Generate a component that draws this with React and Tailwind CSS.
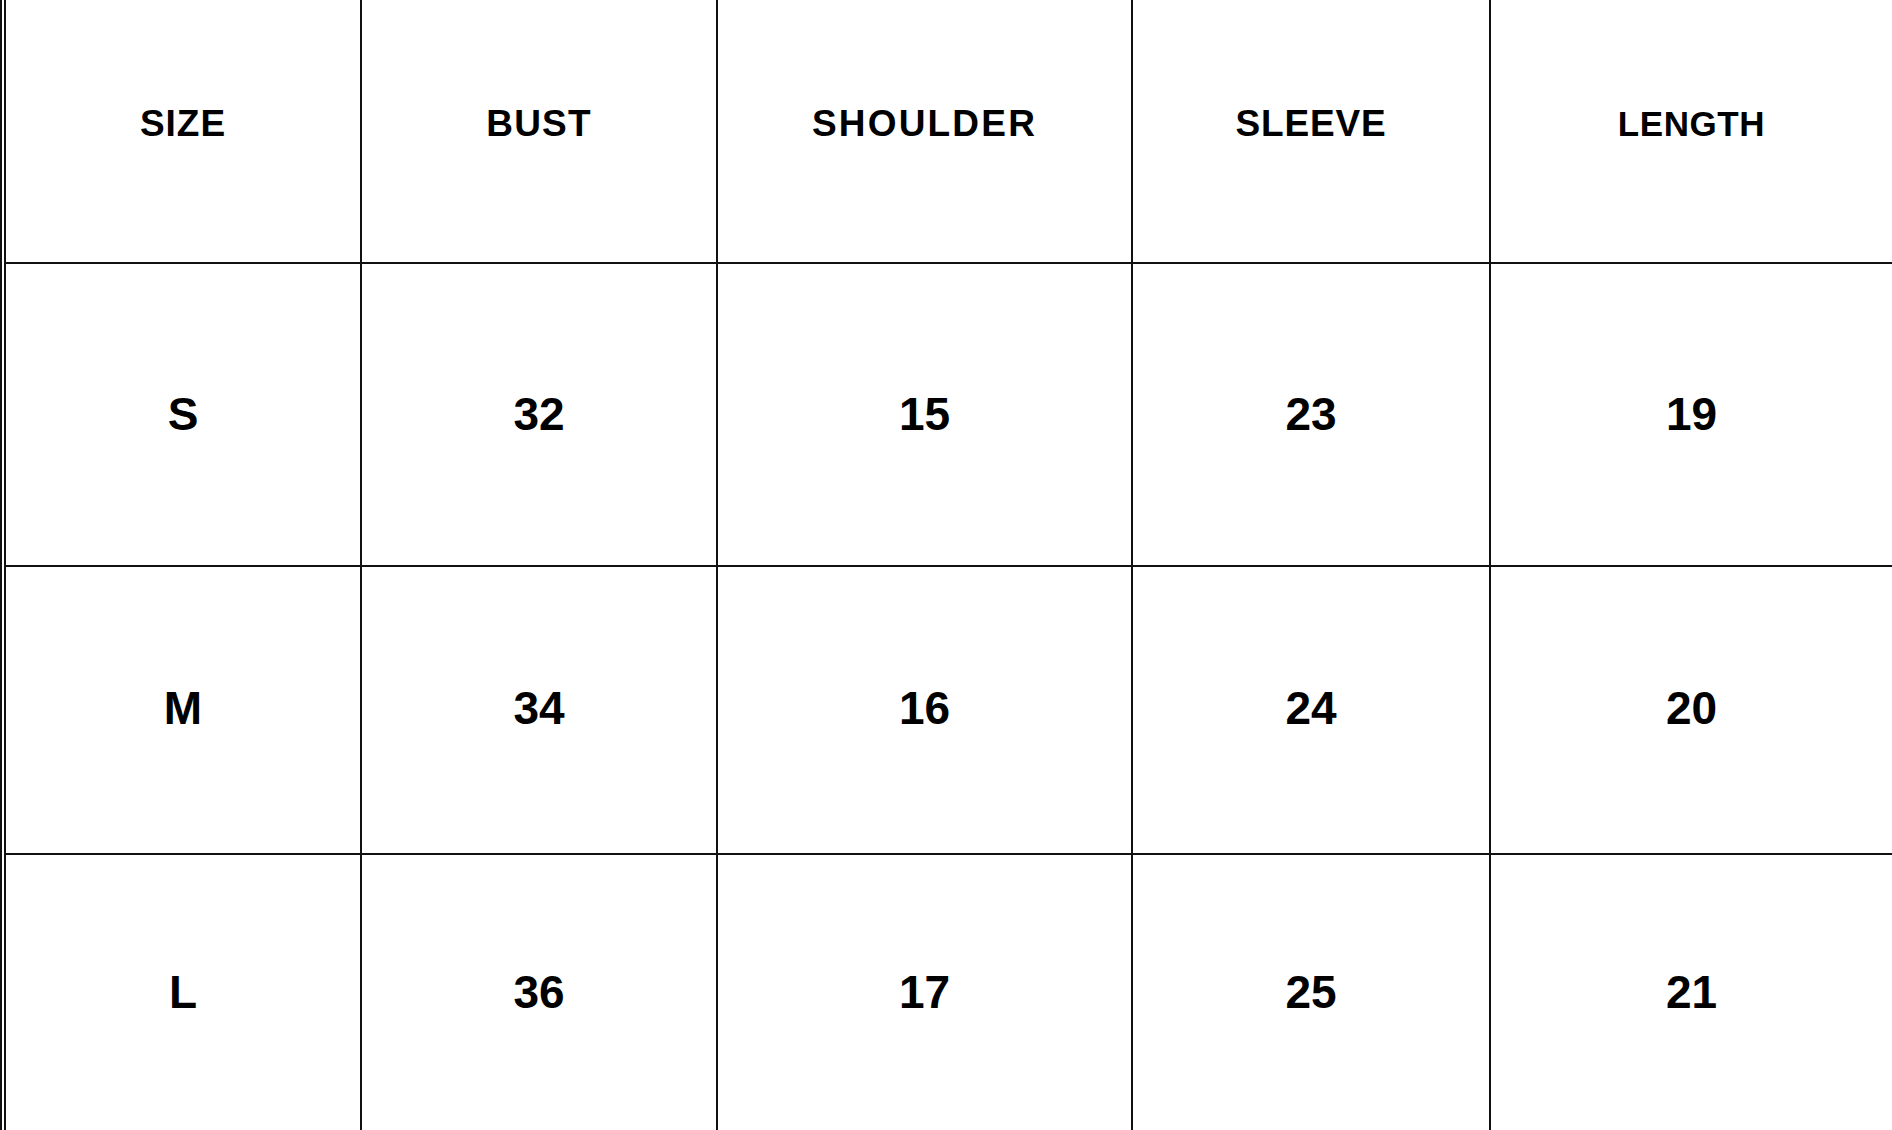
import React from "react";

const columns = [
  { key: "size", label: "SIZE", width: "w-[356px]", track: "tracking-[1px]" },
  { key: "bust", label: "BUST", width: "w-[356px]", track: "tracking-[1.2px]" },
  { key: "shoulder", label: "SHOULDER", width: "w-[415px]", track: "tracking-[2.2px]" },
  { key: "sleeve", label: "SLEEVE", width: "w-[358px]", track: "tracking-[0.8px]" },
  { key: "length", label: "LENGTH", width: "flex-1", track: "tracking-[0.6px]", small: true },
];

const rows = [
  { height: "h-[303px]", pad: "", values: ["S", "32", "15", "23", "19"] },
  { height: "h-[288px]", pad: "pb-[4px]", values: ["M", "34", "16", "24", "20"] },
  { height: "h-[277px]", pad: "", values: ["L", "36", "17", "25", "21"] },
];

export default function App() {
  return (
    <div className="w-[1892px] h-[1130px] overflow-hidden bg-white font-['Liberation_Sans',Arial,sans-serif] text-black">
      <div className="border-l-2 border-[#111] pl-[2px] h-full">
        <div className="border-l-2 border-[#111] h-full">
          <div className="flex h-[264px] border-b-2 border-[#111]">
            {columns.map((col, i) => (
              <div
                key={col.key}
                className={`${col.width} flex items-center justify-center pb-[14px] ${i < columns.length - 1 ? "border-r-2 border-[#111]" : ""}`}
              >
                <span className={`font-bold ${col.track} ${col.small ? "text-[35px]" : "text-[37px]"}`}>
                  {col.label}
                </span>
              </div>
            ))}
          </div>
          {rows.map((row, r) => (
            <div key={r} className={`flex ${row.height} border-b-2 border-[#111]`}>
              {row.values.map((v, i) => (
                <div
                  key={i}
                  className={`${columns[i].width} flex items-center justify-center ${row.pad} ${i < columns.length - 1 ? "border-r-2 border-[#111]" : ""}`}
                >
                  <span className="text-[46px] font-bold">{v}</span>
                </div>
              ))}
            </div>
          ))}
        </div>
      </div>
    </div>
  );
}
